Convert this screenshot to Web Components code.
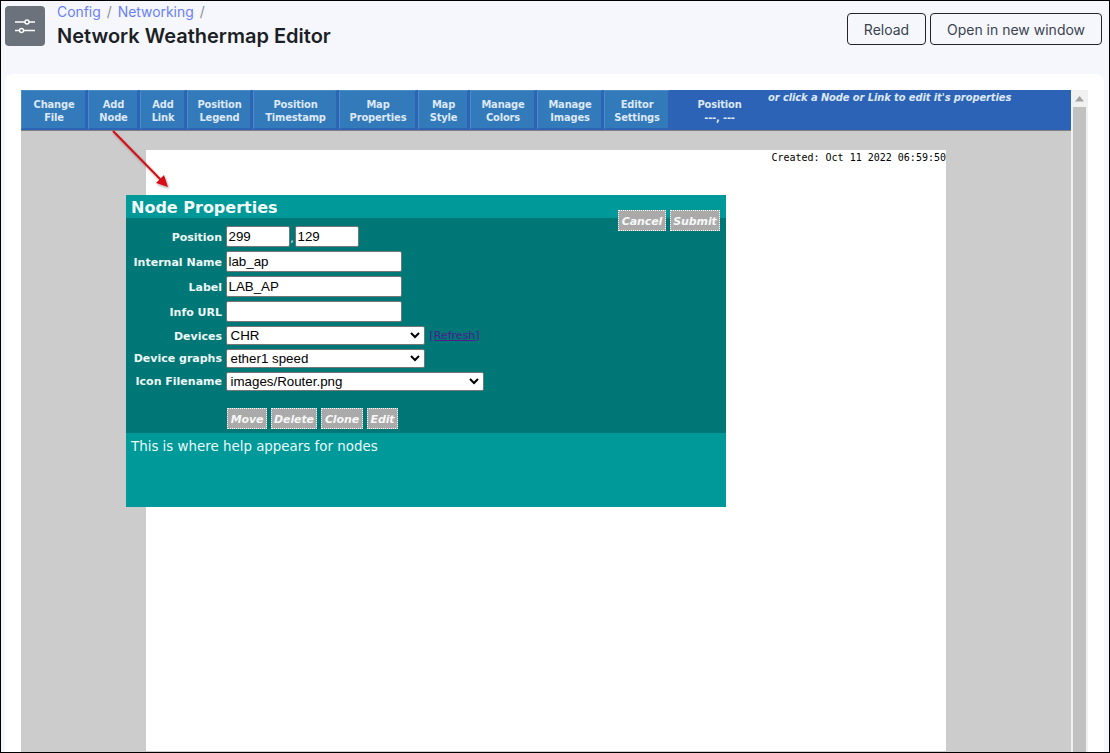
<!DOCTYPE html>
<html lang="en"><head><meta charset="utf-8"><title>Network Weathermap Editor</title>
<style>
html,body{margin:0;padding:0;height:753px;overflow:hidden;background:#f5f7fc}
</style></head><body>
<wm-app>
  <wm-header slot="header"></wm-header>
  <wm-card slot="main">
    <wm-editor>
      <wm-toolbar slot="toolbar">
        <wm-tool style="width:66px">Change<br>File</wm-tool>
        <wm-tool style="width:51px">Add<br>Node</wm-tool>
        <wm-tool style="width:46px">Add<br>Link</wm-tool>
        <wm-tool style="width:65px">Position<br>Legend</wm-tool>
        <wm-tool style="width:85px">Position<br>Timestamp</wm-tool>
        <wm-tool style="width:78px">Map<br>Properties</wm-tool>
        <wm-tool style="width:51px">Map<br>Style</wm-tool>
        <wm-tool style="width:66px">Manage<br>Colors</wm-tool>
        <wm-tool style="width:66px">Manage<br>Images</wm-tool>
        <wm-tool style="width:66px">Editor<br>Settings</wm-tool>
      </wm-toolbar>
      <wm-map slot="map"></wm-map>
      <wm-node-dialog slot="overlay"></wm-node-dialog>
    </wm-editor>
  </wm-card>
</wm-app>
<script>
function def(name, html, init){
  customElements.define(name, class extends HTMLElement{
    constructor(){super();this.attachShadow({mode:'open'}).innerHTML=html;}
    connectedCallback(){ if(init) init(this); }
  });
}
def('wm-app',`<style>
:host{display:flex;flex-direction:column;box-sizing:border-box;width:1110px;height:753px;overflow:hidden;background:#f5f7fc;border:solid #000;border-width:1px 1px 1px 1px;font-family:Inter,"Liberation Sans",sans-serif}
</style><slot name="header"></slot><slot name="main"></slot>`);

def('wm-header',`<style>
:host{display:flex;flex:none;height:73px;box-sizing:border-box;padding:5px 7px 0 4px;justify-content:space-between;align-items:flex-start}
.l{display:flex;gap:12px}
.ic{width:40px;height:40px;border-radius:4px;background:#6b727c;display:flex;align-items:center;justify-content:center}
.crumb{font-size:13.900px;line-height:14px;margin-top:-1px;color:#8a8f98;height:14px;display:flex;gap:6px}
.crumb a{color:#6b80f6;text-decoration:none}
h1{margin:5px 0 0;font-size:20px;line-height:24px;font-weight:600;color:#1c1f26;letter-spacing:0}
.r{display:flex;gap:4px;margin-top:7px}
.b{box-sizing:border-box;height:32px;border:1px solid #212529;border-radius:4px;display:flex;align-items:center;justify-content:center;font-size:14px;color:#3b4350}
</style>
<div class="l"><div class="ic"><svg width="20" height="20" viewBox="0 0 20 20" fill="none" stroke="#fff" stroke-width="1.4"><path d="M0 6h10M14 6h6M0 14.500h4.500M8.500 14.500H20"/><circle cx="12" cy="6" r="2"/><circle cx="6.500" cy="14.500" r="2"/></svg></div>
<div><div class="crumb"><a>Config</a><span>/</span><a>Networking</a><span>/</span></div><h1>Network Weathermap Editor</h1></div></div>
<div class="r"><div class="b" style="width:79px">Reload</div><div class="b" style="width:172px">Open in new window</div></div>`);

def('wm-card',`<style>
:host{display:block;flex:1;min-height:0;margin:0 5px 0 4px;padding:16px 16px 0;background:#fff;border-radius:8px 8px 0 0;overflow:hidden}
</style><slot></slot>`);

def('wm-editor',`<style>
:host{display:flex;height:100%;position:relative;width:1067px}
.c{width:1050px;display:flex;flex-direction:column;background:#ccc;position:relative;height:100%;min-height:0}
.sb{width:17px;background:#f1f1f1;display:flex;flex-direction:column;align-items:stretch}
.up{height:17px;display:flex;align-items:center;justify-content:center}
.th{flex:1;background:#c1c1c1;margin:0 2px}
.ov{position:absolute;left:105px;top:105px}
svg.ar{position:absolute;left:88px;top:38px;overflow:visible}
</style>
<div class="c"><slot name="toolbar"></slot><slot name="map"></slot>
<svg class="ar" width="70" height="70" viewBox="0 0 70 70"><defs><filter id="s" x="-30%" y="-30%" width="160%" height="160%"><feDropShadow dx="1" dy="1.500" stdDeviation="1.200" flood-color="#000" flood-opacity=".35"/></filter></defs><g filter="url(#s)"><path d="M4 3L52 52" stroke="#d40f14" stroke-width="2" fill="none"/><path d="M59 59L47 55L55 47Z" fill="#d40f14"/></g></svg>
<div class="ov"><slot name="overlay"></slot></div></div>
<div class="sb"><div class="up"><svg width="9" height="6" viewBox="0 0 9 6"><path d="M4.500 0L9 5.500H0Z" fill="#a3a3a3"/></svg></div><div class="th"></div></div>`);

def('wm-toolbar',`<style>
:host{display:flex;flex:none;height:41px;box-sizing:border-box;background:#2c63b6;border-bottom:1px solid #808080;font:bold 11px/13px "DejaVu Sans Condensed","DejaVu Sans",Verdana,sans-serif;font-stretch:condensed;letter-spacing:-.15px;color:#dce8f6;overflow:hidden}
.row{display:flex;gap:1px;flex:none}
.pos{flex:none;width:97px;box-sizing:border-box;text-align:center;padding-top:8px;margin-left:1px}
.hint{flex:none;font-style:italic;padding-top:1px;line-height:13px;white-space:nowrap;letter-spacing:-.08px}
</style><div class="row"><slot></slot></div><div class="pos">Position<br>---, ---</div><div class="hint">or click a Node or Link to edit it's properties</div>`);

def('wm-tool',`<style>
:host{display:block;flex:none;box-sizing:border-box;height:40px;padding:7px 0 0 1px;text-align:center;background:#337abb;border:solid;border-width:1px 2px 2px 1px;border-color:#4b8cc6 #2d64b6 #2d64b6 #4b8cc6;white-space:nowrap}
</style><slot></slot>`);

def('wm-map',`<style>
:host{display:block;flex:1;min-height:0;padding:19px 125px 1px}
.m{background:#fff;height:100%;box-sizing:border-box;width:800px;text-align:right;font:10px/13px "DejaVu Sans Mono",monospace;color:#000;padding-top:1px}
</style><div class="m">Created: Oct 11 2022 06:59:50</div>`);

def('wm-field',`<style>
:host{display:contents}
.lb{justify-self:end;font:bold 11px/var(--lb-lh,23px) "DejaVu Sans",Verdana,sans-serif;height:21px;color:#eef7f6;white-space:nowrap}
.v{display:flex;align-items:center;gap:5px;height:21px}
</style><div class="lb"></div><div class="v"><slot></slot></div>`,el=>{el.shadowRoot.querySelector('.lb').textContent=el.getAttribute('label');});

def('wm-input',`<style>
:host{display:block;flex:none;box-sizing:border-box;height:21px;background:#fff;border:1px solid #767676;border-radius:2px;font:13.333px/19px "Liberation Sans",Arial,sans-serif;color:#000;padding:0 2px;white-space:nowrap;overflow:hidden}
</style><slot></slot>`);

def('wm-select',`<style>
:host{display:flex;flex:none;box-sizing:border-box;height:19px;background:#fff;border:1px solid #767676;border-radius:2px;font:13.333px/17px "Liberation Sans",Arial,sans-serif;color:#000;padding:0 4px;white-space:nowrap;justify-content:space-between;align-items:center}
</style><slot></slot><svg width="10" height="7" viewBox="0 0 10 7" fill="none" stroke="#000" stroke-width="2"><path d="M1 1L5 5L9 1"/></svg>`);

def('wm-btn',`<style>
:host{display:flex;box-sizing:border-box;height:21px;padding-top:1px;align-items:center;justify-content:center;background:#aaa;border:1px dotted #fff;font:italic bold 11px/19px "DejaVu Sans",Verdana,sans-serif;letter-spacing:-.1px;color:#f7f7f7;white-space:nowrap}
</style><slot></slot>`);

def('wm-node-dialog',`<style>
:host{display:block;width:600px;height:312px;position:relative;font-family:"DejaVu Sans",Verdana,sans-serif}
.t{height:23px;background:#009999;color:#f2fbfa;font:bold 16px/25px "DejaVu Sans",Verdana,sans-serif;padding-left:5px;box-sizing:border-box;overflow:hidden}
.b{height:215px;background:#007777;box-sizing:border-box;padding:8px 0 0 0;display:flex;flex-direction:column}
.g{display:grid;grid-template-columns:96px 1fr;column-gap:3.500px;row-gap:4px;align-items:center;grid-auto-rows:21px}
.sel{display:grid;grid-template-columns:96px 1fr;column-gap:3.500px;row-gap:4px;grid-auto-rows:19px;margin-top:4px;align-items:center}
.acts{display:flex;gap:4px;margin:17px 0 0 101px}
.top{position:absolute;right:6px;top:15px;display:flex;gap:4px}
.h{height:74px;background:#009999;color:#eafaf9;font:13.400px/16px "DejaVu Sans",Verdana,sans-serif;padding:6px 5px 0;box-sizing:border-box}
a{font:11px/13px "DejaVu Sans",Verdana,sans-serif;color:#4b1c8c;text-decoration:none;white-space:nowrap}
a u{text-decoration:underline}
.c{flex:none;color:#eef7f6;font:11px/15px "DejaVu Sans",Verdana,sans-serif;margin:0 -5px;width:5px;text-align:center;padding-top:3px}
</style>
<div class="t">Node Properties</div>
<div class="top"><wm-btn style="width:48px">Cancel</wm-btn><wm-btn style="width:50px">Submit</wm-btn></div>
<div class="b">
 <div class="g">
  <wm-field label="Position"><wm-input style="width:64px">299</wm-input><span class="c">,</span><wm-input style="width:64px">129</wm-input></wm-field>
  <wm-field label="Internal Name"><wm-input style="width:176px">lab_ap</wm-input></wm-field>
  <wm-field label="Label"><wm-input style="width:176px">LAB_AP</wm-input></wm-field>
  <wm-field label="Info URL"><wm-input style="width:176px"></wm-input></wm-field>
 </div>
 <div class="sel">
  <wm-field label="Devices"><wm-select style="width:199px">CHR</wm-select><a>[<u>Refresh</u>]</a></wm-field>
  <wm-field label="Device graphs" style="--lb-lh:21px"><wm-select style="width:199px">ether1 speed</wm-select></wm-field>
  <wm-field label="Icon Filename" style="--lb-lh:21px"><wm-select style="width:258px">images/Router.png</wm-select></wm-field>
 </div>
 <div class="acts"><wm-btn style="width:40px">Move</wm-btn><wm-btn style="width:46px">Delete</wm-btn><wm-btn style="width:42px">Clone</wm-btn><wm-btn style="width:31px">Edit</wm-btn></div>
</div>
<div class="h">This is where help appears for nodes</div>`);
</script>
</body></html>
